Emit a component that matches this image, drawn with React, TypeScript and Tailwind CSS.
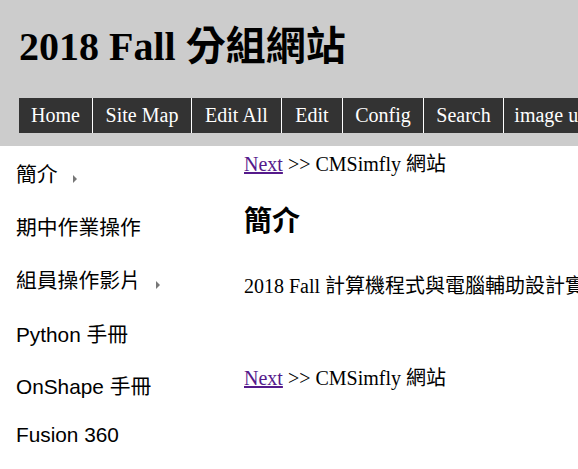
const serif = "font-['Liberation_Serif','Noto_Sans_CJK_TC',serif]";

const navItems = [
  { label: "Home", w: "w-[74px]" },
  { label: "Site Map", w: "w-[99px]" },
  { label: "Edit All", w: "w-[90px]" },
  { label: "Edit", w: "w-[61px]" },
  { label: "Config", w: "w-[81px]" },
  { label: "Search", w: "w-[80px]" },
  { label: "image upload", w: "w-[130px]" },
  { label: "file upload", w: "w-[110px]" },
];

const sideItems = [
  { label: "簡介", sub: true, mt: "mt-[17px]" },
  { label: "期中作業操作", sub: false, mt: "mt-[29px]" },
  { label: "組員操作影片", sub: true, mt: "mt-[29px]" },
  { label: "Python 手冊", sub: false, mt: "mt-[30px]" },
  { label: "OnShape 手冊", sub: false, mt: "mt-[28px]" },
  { label: "Fusion 360", sub: false, mt: "mt-[24px]" },
];

function NextLine({ className = "" }: { className?: string }) {
  return (
    <div className={`text-[20px] leading-[24px] text-black ${className}`}>
      <a href="#" className="text-[#551a8b] underline">
        Next
      </a>{" "}
      &gt;&gt; CMSimfly 網站
    </div>
  );
}

export default function App() {
  return (
    <div className={`w-[578px] h-[469px] overflow-hidden bg-white ${serif}`}>
      <header className="h-[146px] bg-[#cccccc] pt-[24px] pl-[19px]">
        <h1 className="h-[46px] text-[40px] leading-[46px] font-bold text-black whitespace-nowrap">
          2018 Fall 分組網站
        </h1>
        <nav className="mt-[28px] flex h-[35px] w-max">
          {navItems.map((item) => (
            <a
              key={item.label}
              href="#"
              className={`${item.w} shrink-0 h-[35px] bg-[#333333] text-center text-[20px] leading-[35px] text-white border-r border-white whitespace-nowrap`}
            >
              {item.label}
            </a>
          ))}
        </nav>
      </header>

      <div className="flex">
        <aside className="w-[244px] shrink-0 flex flex-col pl-[16px] font-['Liberation_Sans','Noto_Sans_CJK_TC',sans-serif]">
          {sideItems.map((s) => (
            <div key={s.label} className={`${s.mt} flex items-center h-[24px] text-[20.8px] leading-[24px] text-black whitespace-nowrap`}>
              <span>{s.label}</span>
              {s.sub && (
                <span className="ml-[15px] mt-[8px] inline-block w-0 h-0 border-y-[4px] border-y-transparent border-l-[4px] border-l-[#777777]" />
              )}
            </div>
          ))}
        </aside>

        <main className="flex-1 whitespace-nowrap">
          <NextLine className="mt-[6px]" />
          <h2 className="mt-[29px] text-[28px] leading-[34px] font-bold text-black">簡介</h2>
          <p className="mt-[35px] text-[20px] leading-[24px] text-black">
            2018 Fall 計算機程式與電腦輔助設計實習 分組網站
          </p>
          <NextLine className="mt-[68px]" />
        </main>
      </div>
    </div>
  );
}
